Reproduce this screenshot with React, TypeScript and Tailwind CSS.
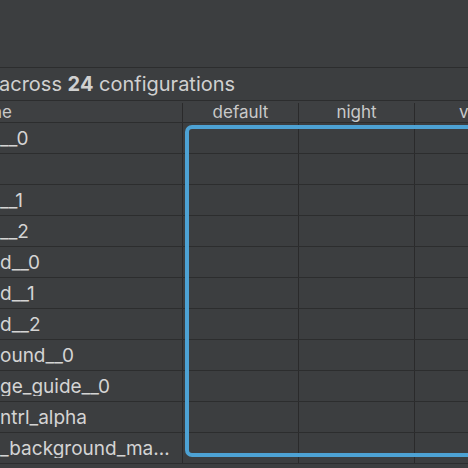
// Translations editor - configurations table (dark theme)

const rows = [
  '__0',
  '',
  '__1',
  '__2',
  'd__0',
  'd__1',
  'd__2',
  'ound__0',
  'ge_guide__0',
  'ntrl_alpha',
  '_background_material_dark',
];

const columns = ['default', 'night', 'v21'];

export default function App() {
  return (
    <div
      className="relative h-[468px] w-[468px] overflow-hidden bg-[#3c3e40] text-[#d2d2d2]"
      style={{ fontFamily: 'Inter, "Noto Sans", "Liberation Sans", sans-serif' }}
    >
      {/* Toolbar area */}
      <div className="h-[68px] border-b border-[#2c2d2e]" />

      {/* Summary */}
      <div className="flex h-[33px] items-center border-b border-[#2c2d2e] text-[20px] leading-none text-[#d0d0d0]">
        <span className="-ml-[1px] whitespace-nowrap">
          across <span className="font-bold">24</span> configurations
        </span>
      </div>

      {/* Header */}
      <div className="flex h-[22px] border-b border-[#2c2d2e] bg-[#3e4042] pt-[2px] text-[17px] leading-none text-[#c9c9c9]">
        <div className="flex w-[183px] shrink-0 items-center overflow-hidden border-r border-[#2a2a2b]">
          <span className="-ml-[8px] whitespace-nowrap">ne</span>
        </div>
        {columns.map((c) => (
          <div
            key={c}
            className="flex w-[116px] shrink-0 items-center justify-center border-r border-[#2a2a2b]"
          >
            {c}
          </div>
        ))}
      </div>

      {/* Rows */}
      {rows.map((name, i) => (
        <div
          key={i}
          className="flex h-[31px] border-b border-[#2c2d2e] text-[19px] leading-none text-[#d4d4d4]"
        >
          <div className="flex w-[183px] shrink-0 items-center overflow-hidden border-r border-[#2a2a2b] pr-[8px]">
            <span className="min-w-0 truncate whitespace-nowrap">{name}</span>
          </div>
          {columns.map((c) => (
            <div key={c} className="w-[116px] shrink-0 border-r border-[#2a2a2b]" />
          ))}
        </div>
      ))}

      {/* Selection outline */}
      <div className="pointer-events-none absolute left-[185px] top-[125px] h-[332px] w-[320px] rounded-[7px] border-[4px] border-[#4da2d4]" />
    </div>
  );
}
